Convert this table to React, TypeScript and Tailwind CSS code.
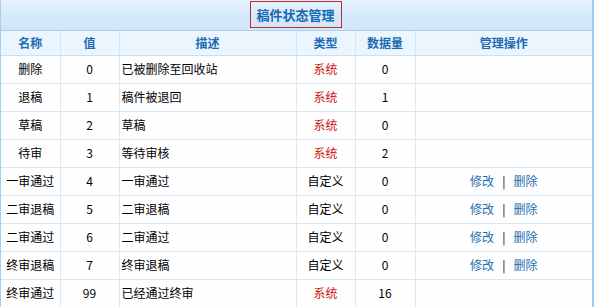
import React from "react";

type Row = { name: string; val: string; desc: string; sys: boolean; count: string };

const rows: Row[] = [
  { name: "删除", val: "0", desc: "已被删除至回收站", sys: true, count: "0" },
  { name: "退稿", val: "1", desc: "稿件被退回", sys: true, count: "1" },
  { name: "草稿", val: "2", desc: "草稿", sys: true, count: "0" },
  { name: "待审", val: "3", desc: "等待审核", sys: true, count: "2" },
  { name: "一审通过", val: "4", desc: "一审通过", sys: false, count: "0" },
  { name: "二审退稿", val: "5", desc: "二审退稿", sys: false, count: "0" },
  { name: "二审通过", val: "6", desc: "二审通过", sys: false, count: "0" },
  { name: "终审退稿", val: "7", desc: "终审退稿", sys: false, count: "0" },
  { name: "终审通过", val: "99", desc: "已经通过终审", sys: true, count: "16" },
];

const font = { fontFamily: '"Noto Sans CJK SC", "Noto Sans", sans-serif' };

export default function App() {
  return (
    <div className="w-[594px] h-[307px] overflow-hidden bg-white text-[12px] text-black" style={font}>
      <div className="border-l border-l-[#a6cff0] border-r-2 border-r-[#a0cdf0] h-full">
        <div className="h-[31px] border-b border-b-[#a9d0ee] bg-gradient-to-b from-[#e8f3fd] via-[#d6eaf9] to-[#cfe6f8] flex justify-center items-start">
          <div className="mt-[1px] ml-[-2px] w-[92px] h-[27px] border border-[#c8272d] flex items-center justify-center text-[13px] font-bold text-[#1668b2] leading-none">
            稿件状态管理
          </div>
        </div>
        <table className="table-fixed border-collapse w-full">
          <colgroup>
            <col className="w-[59px]" />
            <col className="w-[59px]" />
            <col className="w-[177px]" />
            <col className="w-[59px]" />
            <col className="w-[60px]" />
            <col />
          </colgroup>
          <thead>
            <tr className="h-[24px] bg-[#eaf5fd] text-[#1a6bb4] font-bold">
              {["名称", "值", "描述", "类型", "数据量", "管理操作"].map((h, i) => (
                <th
                  key={h}
                  className={`p-0 border-b border-b-[#c7e0f3] ${i < 5 ? "border-r border-r-[#d3e7f6]" : ""} text-center font-bold leading-none`}
                >
                  {h}
                </th>
              ))}
            </tr>
          </thead>
          <tbody>
            {rows.map((r) => (
              <tr key={r.name + r.val} className="h-[28px] bg-[#fefeff]">
                <td className="p-0 border-b border-b-[#d6e8f6] border-r border-r-[#d6e8f6] text-center">{r.name}</td>
                <td className="p-0 border-b border-b-[#d6e8f6] border-r border-r-[#d6e8f6] text-center">{r.val}</td>
                <td className="p-0 pl-[2px] border-b border-b-[#d6e8f6] border-r border-r-[#d6e8f6] text-left">{r.desc}</td>
                <td className={`p-0 border-b border-b-[#d6e8f6] border-r border-r-[#d6e8f6] text-center ${r.sys ? "text-[#cc1111]" : ""}`}>
                  {r.sys ? "系统" : "自定义"}
                </td>
                <td className="p-0 border-b border-b-[#d6e8f6] border-r border-r-[#d6e8f6] text-center">{r.count}</td>
                <td className="p-0 border-b border-b-[#d6e8f6] text-center">
                  {!r.sys && (
                    <span>
                      <span className="text-[#1f6fae]">修改</span>
                      <span className="mx-[8px]">|</span>
                      <span className="text-[#1f6fae]">删除</span>
                    </span>
                  )}
                </td>
              </tr>
            ))}
          </tbody>
        </table>
      </div>
    </div>
  );
}
